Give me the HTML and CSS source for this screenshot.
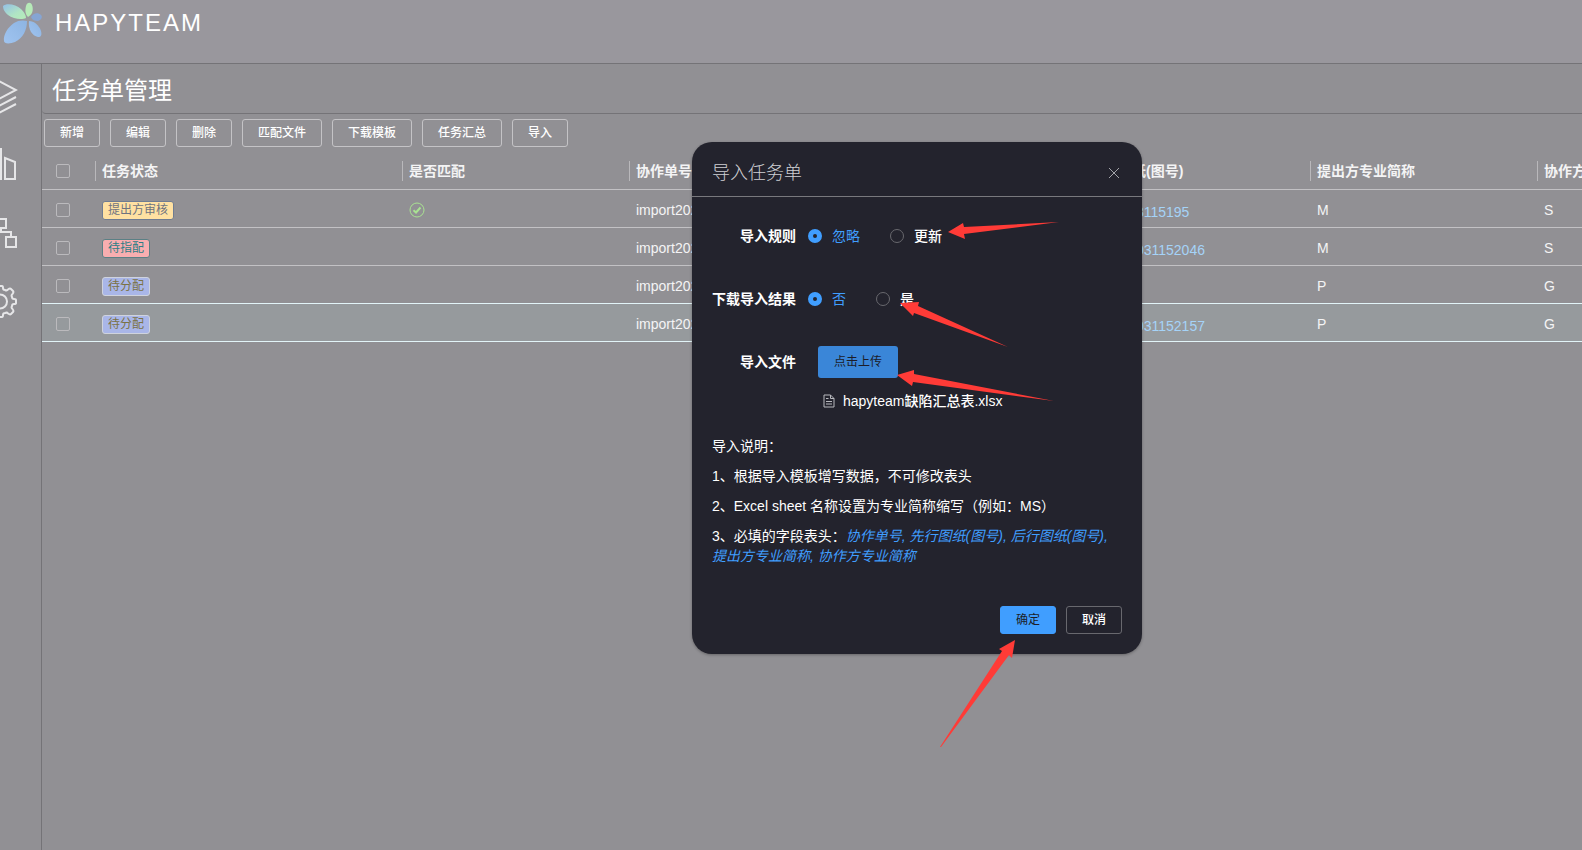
FILE: index.html
```html
<!DOCTYPE html>
<html lang="zh-CN">
<head>
<meta charset="utf-8">
<title>任务单管理</title>
<link rel="stylesheet" href="styles.css">
</head>
<body>
<div class="app">
  <header class="topbar">
    <svg class="logo" viewBox="0 0 44 44" aria-hidden="true">
      <defs>
        <linearGradient id="g1" x1="0" y1="0" x2="1" y2="1"><stop offset="0" stop-color="#93bfe6"/><stop offset=".6" stop-color="#b0e4c4"/><stop offset="1" stop-color="#b5ecb8"/></linearGradient>
        <linearGradient id="g2" x1="0" y1="1" x2="1" y2="0"><stop offset="0" stop-color="#a0c4f0"/><stop offset="1" stop-color="#8db4e2"/></linearGradient>
      </defs>
      <path fill="url(#g1)" d="M3 6C6 3 16 4 21 9C25 13 26 16 26 18C22 20 13 19 8 15C4 12 3 8 3 6Z"/>
      <path fill="#b6eab8" d="M28 17C25 14 25 10 26 6C27 2 31 2 32 5C34 10 32 15 28 17Z"/>
      <path fill="#86a5d3" d="M31 17C33 13 38 12 41 15C43 17 41 20 38 21C35 21 32 20 31 17Z"/>
      <path fill="url(#g2)" d="M29 21C34 21 39 25 41 31C42 35 41 37 38 37C32 36 28 29 29 21Z"/>
      <path fill="url(#g2)" d="M27 21C27 30 23 38 15 42C10 44 4 44 4 41C3 35 8 27 14 23C18 20 24 20 27 21Z"/>
    </svg>
    <span class="brand">HAPYTEAM</span>
  </header>
  <div class="body">
    <nav class="sidebar" aria-label="主菜单">
      <svg class="nav-icon" viewBox="0 0 18 34"><path d="M-1 1L16 10L-1 19M-1 26L16 17M-1 33L16 24"/></svg>
      <svg class="nav-icon" viewBox="0 0 18 34"><path d="M-1 1H1V31H-1M5 10L15 14V31H5Z"/></svg>
      <svg class="nav-icon" viewBox="0 0 18 34"><path d="M-1 3H6V12H-1M1 12V16H11V20M6 21H16V31H6Z"/></svg>
      <svg class="nav-icon" viewBox="0 0 18 34"><path d="M-1 2H2Q3 2 3 4Q3 6 5 6Q7 7 8 5.500Q10 4 11 5L13 7Q14 8 12.500 10Q11 11 12 13Q12 15 14 15Q16 15 16 16V19Q16 20 14 20Q12 20 12 22Q11 24 12.500 25Q14 27 13 28L11 30Q10 31 8 29.500Q7 28 5 29Q3 29 3 31Q3 33 2 33H-1M0 10.500A7 7 0 0 1 0 24.500"/></svg>
    </nav>
    <main class="content">
      <div class="title-panel"><h1>任务单管理</h1></div>
      <div class="toolbar">
        <button>新增</button><button>编辑</button><button>删除</button><button>匹配文件</button><button>下载模板</button><button>任务汇总</button><button>导入</button>
      </div>
      <table class="grid">
        <colgroup><col class="c-check"><col class="c-state"><col class="c-std"><col class="c-std"><col class="c-std"><col class="c-std"><col class="c-std"></colgroup>
        <thead>
          <tr><th><input type="checkbox" aria-label="全选"></th><th><span>任务状态</span></th><th><span>是否匹配</span></th><th><span>协作单号</span></th><th><span>先行图纸(图号)</span></th><th><span>后行图纸(图号)</span></th><th><span>提出方专业简称</span></th><th><span>协作方专业简称</span></th></tr>
        </thead>
        <tbody>
          <tr><td><input type="checkbox" aria-label="选择第1行"></td><td><span class="tag review">提出方审核</span></td><td><svg class="ok" viewBox="0 0 16 16" aria-label="已匹配"><circle cx="8" cy="8" r="7"/><path d="M4.500 8.300L7 10.500L11.500 5.500"/></svg></td><td>import20231031</td><td></td><td class="link"><a href="#">J202303115195</a></td><td>M</td><td>S</td></tr>
          <tr><td><input type="checkbox" aria-label="选择第2行"></td><td><span class="tag assign">待指配</span></td><td></td><td>import20231031</td><td></td><td class="link"><a href="#">J20231031152046</a></td><td>M</td><td>S</td></tr>
          <tr class="before-active"><td><input type="checkbox" aria-label="选择第3行"></td><td><span class="tag dispatch">待分配</span></td><td></td><td>import20231031</td><td></td><td></td><td>P</td><td>G</td></tr>
          <tr class="active"><td><input type="checkbox" aria-label="选择第4行"></td><td><span class="tag dispatch">待分配</span></td><td></td><td>import20231031</td><td></td><td class="link"><a href="#">J20231031152157</a></td><td>P</td><td>G</td></tr>
        </tbody>
      </table>
    </main>
  </div>
</div>

<section class="dialog" role="dialog" aria-labelledby="dlg-title">
  <header class="dialog-head">
    <h2 id="dlg-title">导入任务单</h2>
    <button class="close" aria-label="关闭"><svg viewBox="0 0 12 12"><path d="M1 1L11 11M11 1L1 11"/></svg></button>
  </header>
  <form class="form">
    <div class="row" role="radiogroup" aria-labelledby="l1">
      <span class="label" id="l1">导入规则</span>
      <label class="radio"><input type="radio" name="rule" checked><span>忽略</span></label>
      <label class="radio"><input type="radio" name="rule"><span>更新</span></label>
    </div>
    <div class="row" role="radiogroup" aria-labelledby="l2">
      <span class="label" id="l2">下载导入结果</span>
      <label class="radio"><input type="radio" name="result" checked><span>否</span></label>
      <label class="radio"><input type="radio" name="result"><span>是</span></label>
    </div>
    <div class="row">
      <span class="label">导入文件</span>
      <button type="button" class="upload">点击上传</button>
    </div>
    <div class="file">
      <svg viewBox="0 0 12 14" aria-hidden="true"><path d="M1 1H7.500L11 4.500V13H1ZM7.500 1V4.500H11M3 4.500H5.500M3 7.500H9M3 10H9"/></svg>
      <span>hapyteam缺陷汇总表.xlsx</span>
    </div>
  </form>
  <div class="notes">
    <p>导入说明：</p>
    <p>1、根据导入模板增写数据，不可修改表头</p>
    <p>2、Excel sheet 名称设置为专业简称缩写（例如：MS）</p>
    <p>3、必填的字段表头：<em>协作单号, 先行图纸(图号), 后行图纸(图号), 提出方专业简称, 协作方专业简称</em></p>
  </div>
  <footer class="dialog-foot"><button class="primary">确定</button><button>取消</button></footer>
  <svg class="arrows" viewBox="692 142 450 620" aria-hidden="true">
    <path d="M948 232L963 223L964 227L1059 222L964 234L965 239Z"/>
    <path d="M900 303L919 302L918 306L1008 347L914 313L913 316Z"/>
    <path d="M897 375L914 370L914 374L1054 401L913 382L912 386Z"/>
    <path d="M1015 640L999 649L1002 651L940 747L941 747L1009 655L1012 658Z"/>
  </svg>
</section>
</body>
</html>
```
FILE: styles.css
```css
* { box-sizing: border-box; }
body {
  margin: 0;
  overflow: hidden;
  background: #919094;
  color: #f4f4f5;
  font: 14px/20px "Liberation Sans", "Noto Sans CJK SC", sans-serif;
}
h1, h2, p { margin: 0; font-weight: 400; }
button { font: inherit; cursor: pointer; }
.app { display: flex; flex-direction: column; min-height: 100vh; }
.topbar {
  display: flex;
  align-items: flex-start;
  height: 64px;
  background: #99979d;
  border-bottom: 1px solid #747377;
}
.logo { width: 44px; height: 44px; }
.brand { margin-left: 11px; padding-top: 8px; font-size: 24px; line-height: 30px; letter-spacing: 2px; color: #fff; }
.body { display: flex; flex: 1; }
.sidebar {
  display: flex;
  flex-direction: column;
  gap: 34px;
  flex: 0 0 42px;
  padding-top: 16px;
  border-right: 1px solid #747377;
}
.nav-icon { width: 18px; height: 34px; fill: none; stroke: #e6e6e8; stroke-width: 2; }
.content { flex: 1; min-width: 0; overflow: hidden; }
.title-panel {
  padding: 11px 10px 7px;
  border: 1px solid #747377;
  border-width: 0 0 1px;
  border-radius: 4px 0 0 4px;
}
h1 { font-size: 24px; line-height: 31px; color: #fff; }
.toolbar { display: flex; gap: 10px; padding: 5px 2px 4px; }
.toolbar button, .dialog-foot button {
  height: 28px;
  padding: 0 15px;
  border: 1px solid #c4c3c6;
  border-radius: 3px;
  background: transparent;
  color: #fff;
  font-size: 12px;
  font-weight: 500;
  line-height: 26px;
}
.grid { width: 1722px; border-collapse: collapse; table-layout: fixed; }
.c-check { width: 53px; }
.c-state { width: 307px; }
.c-std { width: 227px; }
.grid th, .grid td {
  height: 38px;
  padding: 0;
  border-bottom: 1px solid #c2c1c4;
  text-align: left;
  white-space: nowrap;
}
.grid th span { display: block; border-left: 1px solid #b9b8bb; padding-left: 6px; }
.grid td { padding: 4px 0 0 7px; }
.grid td.link { padding-top: 7px; }
.grid th:first-child, .grid td:first-child { padding-left: 14px; }
.grid th { padding-top: 2px; }
.grid input {
  display: block;
  appearance: none;
  width: 14px;
  height: 14px;
  margin: 0;
  border: 1px solid #bbbabd;
  border-radius: 2px;
}
.grid a { color: #a5d3f8; text-decoration: none; }
.grid .before-active td { border-bottom-color: #e2f4f8; }
.grid .active td { background: #969a9d; border-bottom-color: #e2f4f8; }
.tag {
  display: inline-block;
  height: 19px;
  padding: 0 5px;
  border: 1px solid;
  border-radius: 3px;
  font-size: 12px;
  line-height: 17px;
  vertical-align: middle;
}
.review { background: #ffe1a2; border-color: #6f7c92; color: #6f7480; }
.assign { background: #f9aeb0; border-color: #5b8085; color: #2b7f86; }
.dispatch { background: #a9b6e8; border-color: #cfd3dd; color: #7b7245; }
.ok { display: block; width: 16px; height: 16px; fill: none; stroke: #a9e392; stroke-width: 1; }
.ok path { stroke-width: 2; }

.dialog {
  position: absolute;
  top: 142px;
  left: calc(50% - 99px);
  width: 450px;
  border-radius: 20px;
  background: #23232d;
  color: #fff;
  box-shadow: 0 1px 3px rgba(0, 0, 0, .3);
}
.dialog-head {
  display: flex;
  align-items: center;
  justify-content: space-between;
  padding: 19px 22px 11px 20px;
  border-bottom: 1px solid #78787d;
}
h2 { font-size: 18px; line-height: 24px; color: #cfd0d4; font-weight: 300; }
.close { display: flex; padding: 0; border: 0; background: none; }
.close svg { width: 12px; height: 12px; fill: none; stroke: #a3a4a9; }
.form { padding-top: 23px; }
.row { display: flex; align-items: center; height: 32px; margin-bottom: 31px; }
.label { width: 104px; margin-right: 12px; text-align: right; font-weight: 700; }
.radio { display: flex; align-items: center; gap: 10px; margin-right: 30px; font-weight: 500; }
.radio input {
  appearance: none;
  width: 14px;
  height: 14px;
  margin: 0;
  border: 1px solid #68686e;
  border-radius: 50%;
}
.radio input:checked { border: 5px solid #409eff; background: #23232d; }
.radio input:checked + span { color: #409eff; font-weight: 400; }
.upload {
  height: 32px;
  margin-left: 10px;
  padding: 0 16px;
  border: 0;
  border-radius: 3px;
  background: #3a86d8;
  color: #1c1d29;
  font-size: 12px;
}
.form .row:nth-child(3) { margin-bottom: 13px; }
.file { display: flex; align-items: center; gap: 8px; padding-left: 131px; font-weight: 500; }
.file svg { width: 12px; height: 14px; fill: none; stroke: #b8b9be; }
.notes { display: flex; flex-direction: column; gap: 10px; padding: 25px 28px 0 20px; font-weight: 500; }
.notes em { color: #409eff; font-weight: 400; }
.dialog-foot { display: flex; justify-content: flex-end; gap: 10px; padding: 40px 20px 20px; }
.dialog-foot button { border-color: #68686e; }
.dialog-foot .primary { background: #409eff; border-color: #409eff; color: #1c1d29; font-weight: 400; }
.arrows { position: absolute; top: 0; left: 0; width: 450px; height: 620px; fill: #ff3b37; pointer-events: none; }
```
